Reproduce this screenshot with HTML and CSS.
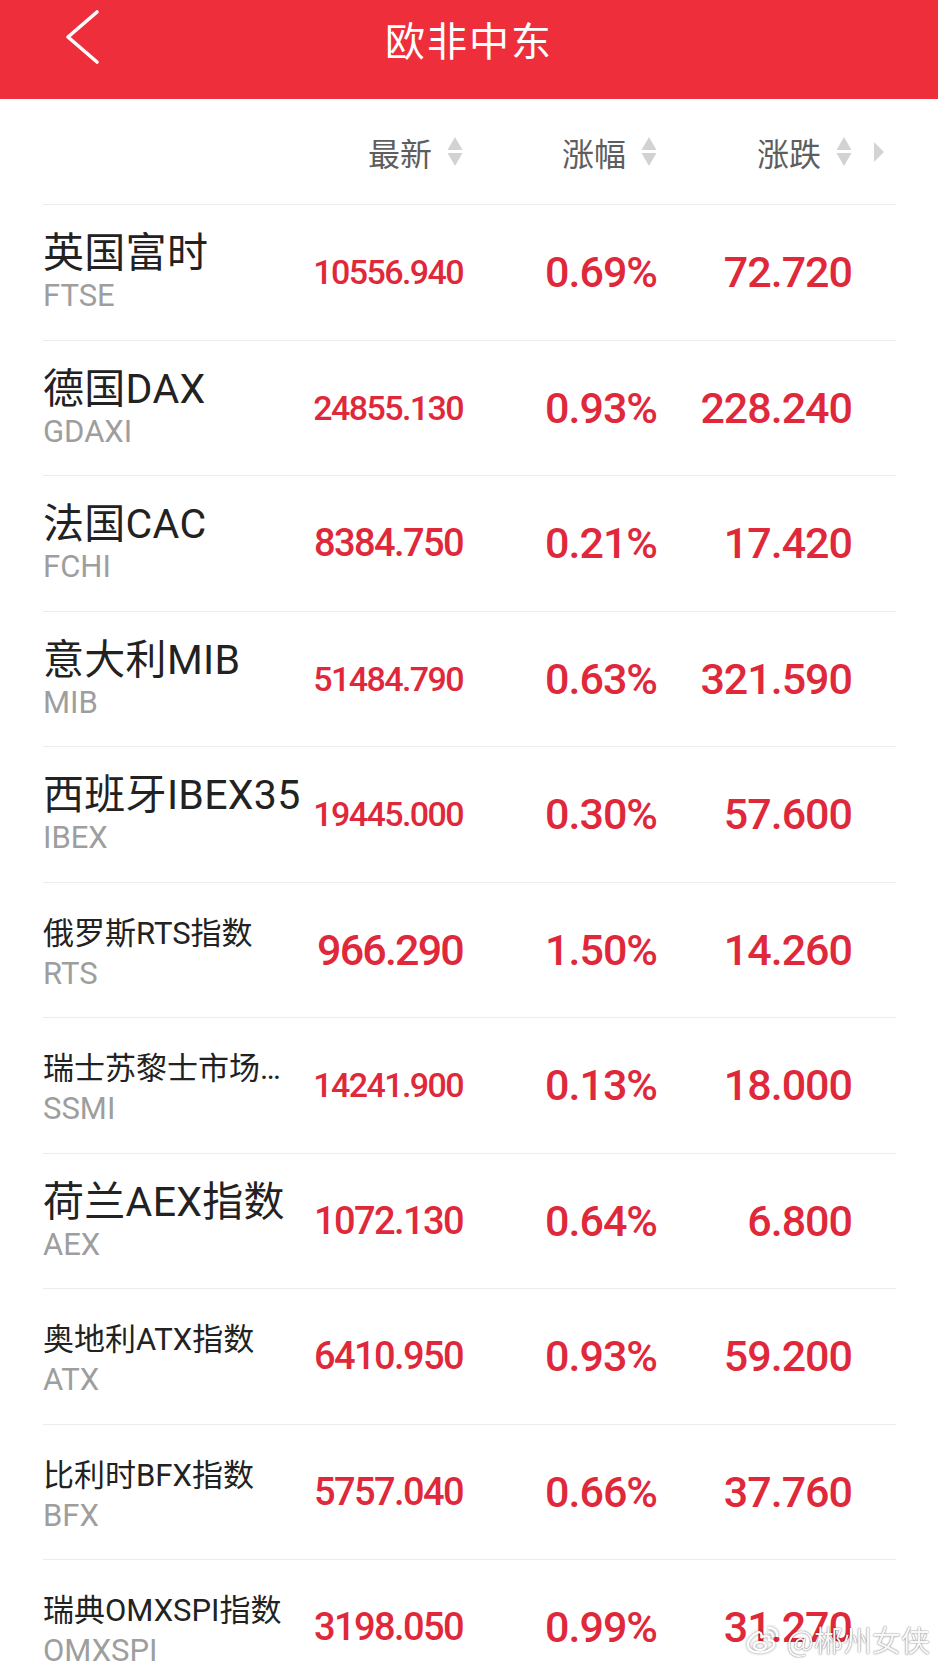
FILE: index.html
```html
<!DOCTYPE html>
<html lang="zh-CN">
<head>
  <meta charset="utf-8">
  <title>欧非中东</title>
  <link rel="stylesheet" href="styles.css">
</head>
<body>

  <div class="nav">
    <a class="back" href="#">
      <svg width="44" height="72" viewBox="0 0 44 72"><polyline points="37,12 8,37 37,62" fill="none" stroke="#fff" stroke-width="3.6" stroke-linecap="round" stroke-linejoin="round"/></svg>
    </a>
    <h1 class="title">欧非中东</h1>
  </div>

  <div class="list">
    <div class="head">
      <span></span>
      <span class="sort">最新<svg class="arrows" width="16" height="30" viewBox="0 0 16 30"><path d="M8 0L15.5 13H0.5ZM0.5 16H15.5L8 29Z"/></svg></span>
      <span class="sort">涨幅<svg class="arrows" width="16" height="30" viewBox="0 0 16 30"><path d="M8 0L15.5 13H0.5ZM0.5 16H15.5L8 29Z"/></svg></span>
      <span class="sort">涨跌<svg class="arrows" width="16" height="30" viewBox="0 0 16 30"><path d="M8 0L15.5 13H0.5ZM0.5 16H15.5L8 29Z"/></svg></span>
      <span class="more"><svg width="10" height="20" viewBox="0 0 10 20"><path d="M0 0L10 10L0 20Z"/></svg></span>
    </div>

    <div class="row">
      <div class="name"><p class="cn big">英国富时</p><p class="code">FTSE</p></div>
      <span class="price fit9">10556.940</span>
      <span class="rate">0.69%</span>
      <span class="chg">72.720</span>
    </div>
    <div class="row">
      <div class="name"><p class="cn big">德国DAX</p><p class="code">GDAXI</p></div>
      <span class="price fit9">24855.130</span>
      <span class="rate">0.93%</span>
      <span class="chg">228.240</span>
    </div>
    <div class="row">
      <div class="name"><p class="cn big">法国CAC</p><p class="code">FCHI</p></div>
      <span class="price fit8">8384.750</span>
      <span class="rate">0.21%</span>
      <span class="chg">17.420</span>
    </div>
    <div class="row">
      <div class="name"><p class="cn big">意大利MIB</p><p class="code">MIB</p></div>
      <span class="price fit9">51484.790</span>
      <span class="rate">0.63%</span>
      <span class="chg">321.590</span>
    </div>
    <div class="row">
      <div class="name"><p class="cn big">西班牙IBEX35</p><p class="code">IBEX</p></div>
      <span class="price fit9">19445.000</span>
      <span class="rate">0.30%</span>
      <span class="chg">57.600</span>
    </div>
    <div class="row">
      <div class="name"><p class="cn small">俄罗斯RTS指数</p><p class="code">RTS</p></div>
      <span class="price fit7">966.290</span>
      <span class="rate">1.50%</span>
      <span class="chg">14.260</span>
    </div>
    <div class="row">
      <div class="name"><p class="cn small">瑞士苏黎士市场指数</p><p class="code">SSMI</p></div>
      <span class="price fit9">14241.900</span>
      <span class="rate">0.13%</span>
      <span class="chg">18.000</span>
    </div>
    <div class="row">
      <div class="name"><p class="cn big">荷兰AEX指数</p><p class="code">AEX</p></div>
      <span class="price fit8">1072.130</span>
      <span class="rate">0.64%</span>
      <span class="chg">6.800</span>
    </div>
    <div class="row">
      <div class="name"><p class="cn small">奥地利ATX指数</p><p class="code">ATX</p></div>
      <span class="price fit8">6410.950</span>
      <span class="rate">0.93%</span>
      <span class="chg">59.200</span>
    </div>
    <div class="row">
      <div class="name"><p class="cn small">比利时BFX指数</p><p class="code">BFX</p></div>
      <span class="price fit8">5757.040</span>
      <span class="rate">0.66%</span>
      <span class="chg">37.760</span>
    </div>
    <div class="row">
      <div class="name"><p class="cn small">瑞典OMXSPI指数</p><p class="code">OMXSPI</p></div>
      <span class="price fit8">3198.050</span>
      <span class="rate">0.99%</span>
      <span class="chg">31.270</span>
    </div>
  </div>

  <!-- 右下角水印 -->
  <div class="mark">
    <svg width="36" height="30" viewBox="0 0 36 30"><g fill="none" stroke="#fff" stroke-width="2.2"><path d="M14 8C7 11 2 17 3 22C4 27 11 29 18 28C25 27 30 23 29 19C28 16 25 16 24 17C25 14 24 12 21 12C19 12 17 13 16 14C17 11 17 9 14 8Z"/><ellipse cx="15" cy="22" rx="6" ry="4"/><path d="M23 4C28 3 33 7 32 13"/><path d="M23 8C26 8 28 10 28 13"/></g></svg>
    <span>@郴州女侠</span>
  </div>

</body>
</html>
```

FILE: styles.css
```css
body { margin: 0; background: #fff; font-family: Roboto, "Noto Sans CJK SC", sans-serif; }

/* 顶部红色导航条 */
.nav { height: 99px; background: #ee2e3a; display: grid; grid-template-columns: 1fr auto 1fr; align-items: start; }
.back { display: block; padding-left: 60px; }
.back svg { display: block; }
.title { margin: 0; font-family: "Noto Sans CJK SC", sans-serif; font-size: 40px; font-weight: 400; line-height: 78px; letter-spacing: 2px; color: #fff; }

/* 行情列表 */
.list { margin: 0 42px 0 43px; }
.head, .row { display: grid; grid-template-columns: 270px 150px 194px 195px 1fr; align-items: center; border-bottom: 1px solid #ececec; }
.head { height: 105px; }
.row { height: 134.5px; }

.sort { display: flex; align-items: center; justify-content: flex-end; gap: 15px; font-family: "Noto Sans CJK SC", sans-serif; font-size: 32px; color: #5e5e5e; }
.arrows { display: block; fill: #d2d2d2; }
.more { padding-left: 22px; }
.more svg { display: block; fill: #d4d4d4; }

.name { min-width: 0; }
.name p { margin: 0; white-space: nowrap; overflow: hidden; text-overflow: ellipsis; }
.cn { color: #222; max-width: 262px; }
.cn.big { font-size: 41px; line-height: 48px; letter-spacing: 0.3px; }
.cn.small { font-size: 31px; line-height: 38px; padding: 8px 0 2px; }
.code { font-size: 31px; line-height: 38px; color: #9e9e9e; }

.price, .rate, .chg { text-align: right; color: #e0283b; font-weight: 500; line-height: 50px; white-space: nowrap; }
.fit9 { font-size: 34px; letter-spacing: -1.6px; }
.fit8 { font-size: 38px; letter-spacing: -1.6px; }
.fit7 { font-size: 43px; letter-spacing: -1.8px; }
.rate, .chg { font-size: 43px; letter-spacing: -1px; }

.mark { position: fixed; right: 8px; bottom: 8px; display: flex; align-items: center; gap: 6px; font-family: "Noto Sans CJK SC", sans-serif; font-size: 29px; color: rgba(255,255,255,.95); text-shadow: 0 0 2px rgba(0,0,0,.45), 0 0 1px rgba(0,0,0,.4); }
.mark svg { filter: drop-shadow(0 0 1.5px rgba(0,0,0,.45)); }
```
